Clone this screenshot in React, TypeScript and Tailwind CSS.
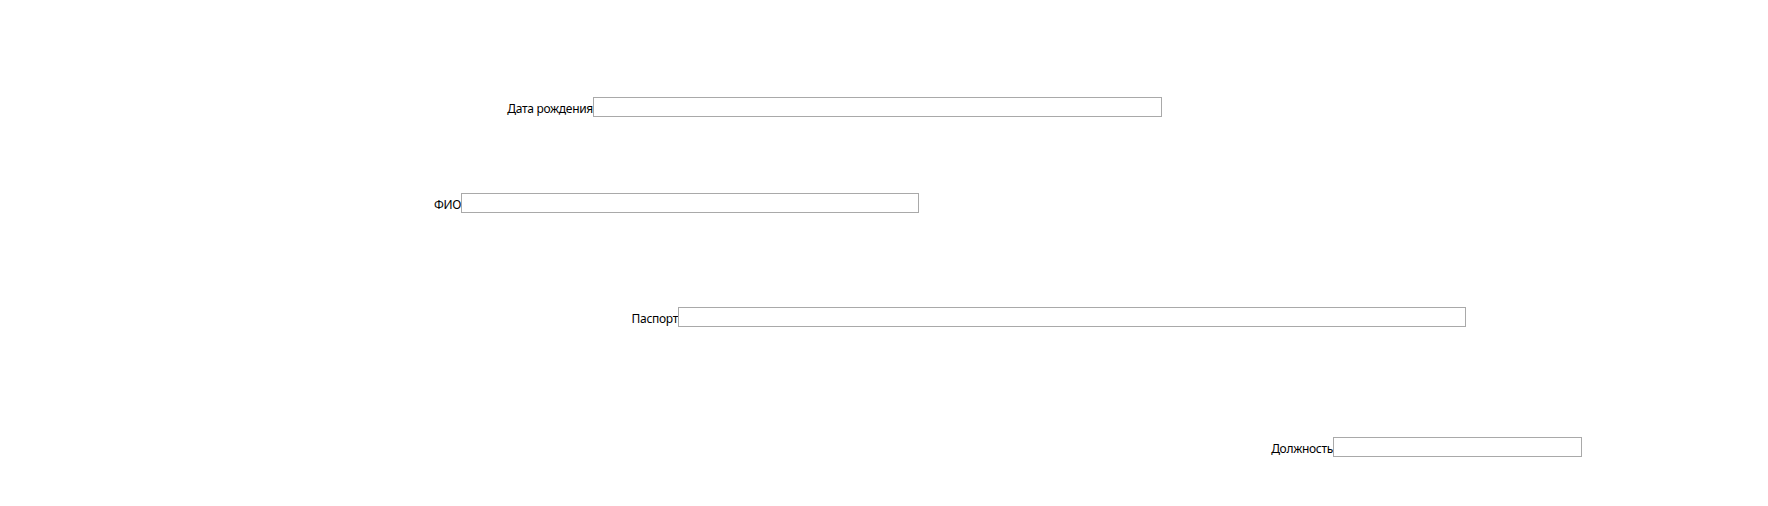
import React from 'react';

interface FieldProps {
  label: string;
  left: string;
  width: string;
  top: string;
}

const Field: React.FC<FieldProps> = ({ label, left, width, top }) => (
  <div className={`flex items-center h-[20px] ${top}`}>
    <div className={`flex justify-end shrink-0 ${left}`}>
      <label className="text-[12px] leading-[20px] mt-[3px] tracking-[-0.3px] text-black whitespace-nowrap">
        {label}
      </label>
    </div>
    <input
      type="text"
      className={`h-[20px] border border-[#a9a9a9] bg-white outline-none ${width}`}
    />
  </div>
);

export default function App() {
  return (
    <div
      className="w-[1768px] h-[506px] bg-white flex flex-col"
      style={{ fontFamily: '"Noto Sans", "Open Sans", sans-serif' }}
    >
      <Field label="Дата рождения" left="w-[593px]" width="w-[569px]" top="mt-[97px]" />
      <Field label="ФИО" left="w-[461px]" width="w-[458px]" top="mt-[76px]" />
      <Field label="Паспорт" left="w-[678px]" width="w-[788px]" top="mt-[94px]" />
      <Field label="Должность" left="w-[1333px]" width="w-[249px]" top="mt-[110px]" />
    </div>
  );
}
